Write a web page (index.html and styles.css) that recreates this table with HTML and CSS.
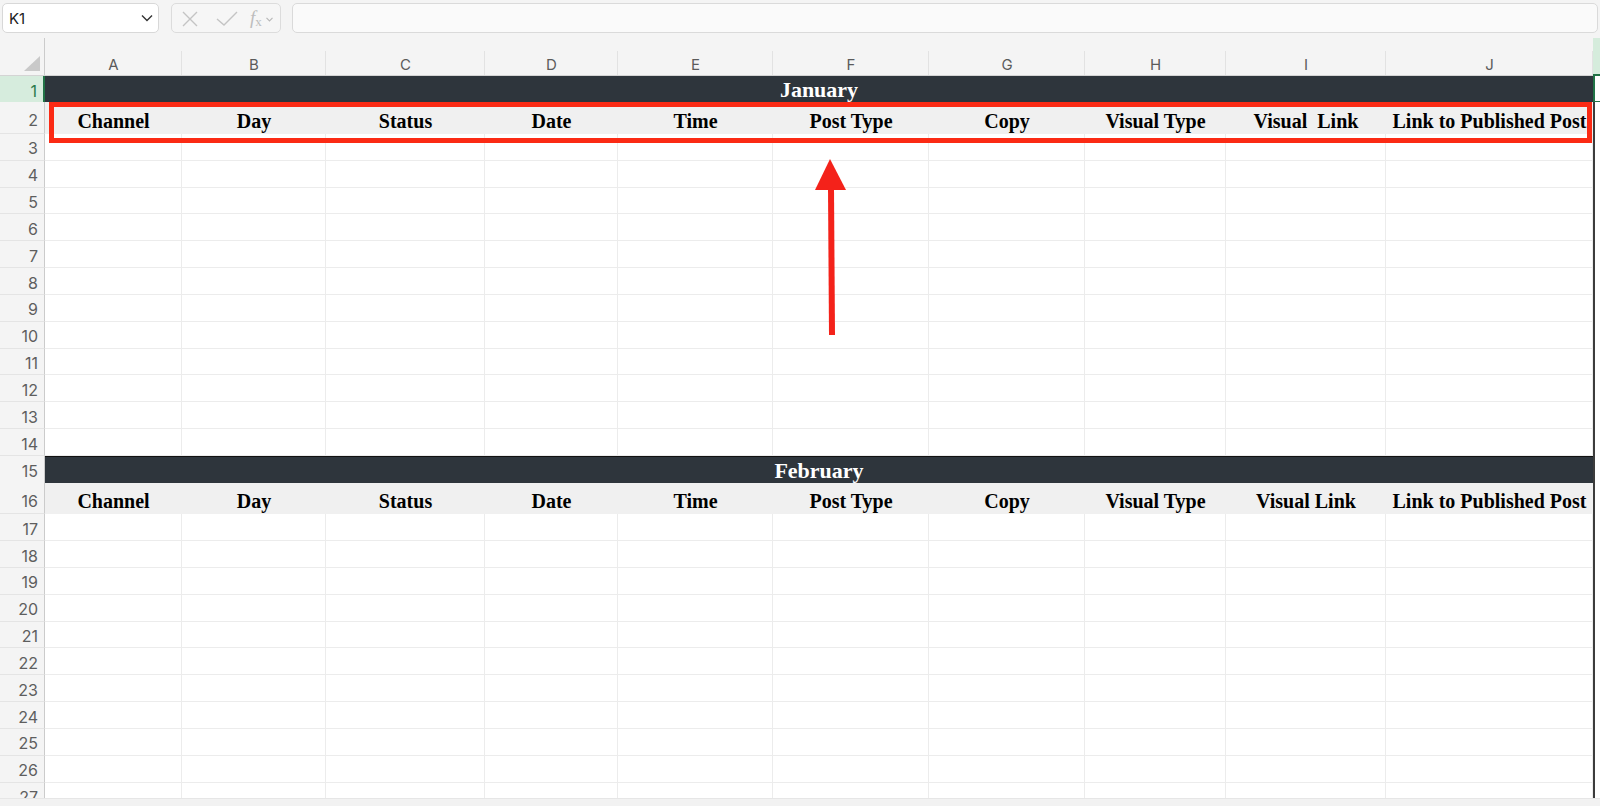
FILE: index.html
```html
<!DOCTYPE html>
<html lang="en">
<head>
<meta charset="utf-8">
<title>Content Calendar</title>
<link rel="stylesheet" href="styles.css">
</head>
<body>
<div class="app">
  <div class="toolbar">
    <div class="namebox">
      <span class="nb-text">K1</span>
      <svg class="chev" width="12" height="8" viewBox="0 0 12 8"><path d="M1 1.5 L6 6.5 L11 1.5" fill="none" stroke="#333" stroke-width="1.4"/></svg>
    </div>
    <div class="fxgroup">
      <svg class="ic-x" width="16" height="16" viewBox="0 0 16 16"><path d="M1 1 L15 15 M15 1 L1 15" stroke="#c4c4c4" stroke-width="1.4" fill="none"/></svg>
      <svg class="ic-ok" width="22" height="16" viewBox="0 0 22 16"><path d="M1 8 L8 14 L21 1" stroke="#c4c4c4" stroke-width="1.4" fill="none"/></svg>
      <span class="fx"><span class="fx-f">f</span><span class="fx-x">x</span></span>
      <svg class="ic-dd" width="7" height="5" viewBox="0 0 7 5"><path d="M0.5 0.8 L3.5 4 L6.5 0.8" stroke="#b8b8b8" stroke-width="1.1" fill="none"/></svg>
    </div>
    <div class="formula"></div>
  </div>

  <div class="sheet">
    <div class="row colhead">
      <div class="corner"><svg width="18" height="16" viewBox="0 0 18 16"><path d="M17 0 L17 15 L1 15 Z" fill="#c9c9c9"/></svg></div>
      <div class="ch">A</div><div class="ch">B</div><div class="ch">C</div><div class="ch">D</div><div class="ch">E</div>
      <div class="ch">F</div><div class="ch">G</div><div class="ch">H</div><div class="ch">I</div><div class="ch">J</div>
      <div class="ch chk"></div>
    </div>

    <div class="row r1"><div class="rh rsel">1</div><div class="band">January</div><div class="k ksel"></div></div>
    <div class="row r2"><div class="rh rh-hd">2</div>
      <div class="hd">Channel</div><div class="hd">Day</div><div class="hd">Status</div><div class="hd">Date</div><div class="hd">Time</div>
      <div class="hd">Post Type</div><div class="hd">Copy</div><div class="hd">Visual Type</div><div class="hd pre">Visual  Link</div><div class="hd">Link to Published Post</div>
      <div class="k kline"></div></div>
    <div class="row"><div class="rh">3</div><div class="c"></div><div class="c"></div><div class="c"></div><div class="c"></div><div class="c"></div><div class="c"></div><div class="c"></div><div class="c"></div><div class="c"></div><div class="c"></div><div class="k kline"></div></div>
    <div class="row"><div class="rh">4</div><div class="c"></div><div class="c"></div><div class="c"></div><div class="c"></div><div class="c"></div><div class="c"></div><div class="c"></div><div class="c"></div><div class="c"></div><div class="c"></div><div class="k kline"></div></div>
    <div class="row"><div class="rh">5</div><div class="c"></div><div class="c"></div><div class="c"></div><div class="c"></div><div class="c"></div><div class="c"></div><div class="c"></div><div class="c"></div><div class="c"></div><div class="c"></div><div class="k kline"></div></div>
    <div class="row"><div class="rh">6</div><div class="c"></div><div class="c"></div><div class="c"></div><div class="c"></div><div class="c"></div><div class="c"></div><div class="c"></div><div class="c"></div><div class="c"></div><div class="c"></div><div class="k kline"></div></div>
    <div class="row"><div class="rh">7</div><div class="c"></div><div class="c"></div><div class="c"></div><div class="c"></div><div class="c"></div><div class="c"></div><div class="c"></div><div class="c"></div><div class="c"></div><div class="c"></div><div class="k kline"></div></div>
    <div class="row"><div class="rh">8</div><div class="c"></div><div class="c"></div><div class="c"></div><div class="c"></div><div class="c"></div><div class="c"></div><div class="c"></div><div class="c"></div><div class="c"></div><div class="c"></div><div class="k kline"></div></div>
    <div class="row"><div class="rh">9</div><div class="c"></div><div class="c"></div><div class="c"></div><div class="c"></div><div class="c"></div><div class="c"></div><div class="c"></div><div class="c"></div><div class="c"></div><div class="c"></div><div class="k kline"></div></div>
    <div class="row"><div class="rh">10</div><div class="c"></div><div class="c"></div><div class="c"></div><div class="c"></div><div class="c"></div><div class="c"></div><div class="c"></div><div class="c"></div><div class="c"></div><div class="c"></div><div class="k kline"></div></div>
    <div class="row"><div class="rh">11</div><div class="c"></div><div class="c"></div><div class="c"></div><div class="c"></div><div class="c"></div><div class="c"></div><div class="c"></div><div class="c"></div><div class="c"></div><div class="c"></div><div class="k kline"></div></div>
    <div class="row"><div class="rh">12</div><div class="c"></div><div class="c"></div><div class="c"></div><div class="c"></div><div class="c"></div><div class="c"></div><div class="c"></div><div class="c"></div><div class="c"></div><div class="c"></div><div class="k kline"></div></div>
    <div class="row"><div class="rh">13</div><div class="c"></div><div class="c"></div><div class="c"></div><div class="c"></div><div class="c"></div><div class="c"></div><div class="c"></div><div class="c"></div><div class="c"></div><div class="c"></div><div class="k kline"></div></div>
    <div class="row"><div class="rh">14</div><div class="c"></div><div class="c"></div><div class="c"></div><div class="c"></div><div class="c"></div><div class="c"></div><div class="c"></div><div class="c"></div><div class="c"></div><div class="c"></div><div class="k kline"></div></div>

    <div class="row r15"><div class="rh">15</div><div class="band band-top">February</div><div class="k kline"></div></div>
    <div class="row r16"><div class="rh rh-hd">16</div>
      <div class="hd">Channel</div><div class="hd">Day</div><div class="hd">Status</div><div class="hd">Date</div><div class="hd">Time</div>
      <div class="hd">Post Type</div><div class="hd">Copy</div><div class="hd">Visual Type</div><div class="hd">Visual Link</div><div class="hd">Link to Published Post</div>
      <div class="k kline"></div></div>
    <div class="row"><div class="rh">17</div><div class="c"></div><div class="c"></div><div class="c"></div><div class="c"></div><div class="c"></div><div class="c"></div><div class="c"></div><div class="c"></div><div class="c"></div><div class="c"></div><div class="k kline"></div></div>
    <div class="row"><div class="rh">18</div><div class="c"></div><div class="c"></div><div class="c"></div><div class="c"></div><div class="c"></div><div class="c"></div><div class="c"></div><div class="c"></div><div class="c"></div><div class="c"></div><div class="k kline"></div></div>
    <div class="row"><div class="rh">19</div><div class="c"></div><div class="c"></div><div class="c"></div><div class="c"></div><div class="c"></div><div class="c"></div><div class="c"></div><div class="c"></div><div class="c"></div><div class="c"></div><div class="k kline"></div></div>
    <div class="row"><div class="rh">20</div><div class="c"></div><div class="c"></div><div class="c"></div><div class="c"></div><div class="c"></div><div class="c"></div><div class="c"></div><div class="c"></div><div class="c"></div><div class="c"></div><div class="k kline"></div></div>
    <div class="row"><div class="rh">21</div><div class="c"></div><div class="c"></div><div class="c"></div><div class="c"></div><div class="c"></div><div class="c"></div><div class="c"></div><div class="c"></div><div class="c"></div><div class="c"></div><div class="k kline"></div></div>
    <div class="row"><div class="rh">22</div><div class="c"></div><div class="c"></div><div class="c"></div><div class="c"></div><div class="c"></div><div class="c"></div><div class="c"></div><div class="c"></div><div class="c"></div><div class="c"></div><div class="k kline"></div></div>
    <div class="row"><div class="rh">23</div><div class="c"></div><div class="c"></div><div class="c"></div><div class="c"></div><div class="c"></div><div class="c"></div><div class="c"></div><div class="c"></div><div class="c"></div><div class="c"></div><div class="k kline"></div></div>
    <div class="row"><div class="rh">24</div><div class="c"></div><div class="c"></div><div class="c"></div><div class="c"></div><div class="c"></div><div class="c"></div><div class="c"></div><div class="c"></div><div class="c"></div><div class="c"></div><div class="k kline"></div></div>
    <div class="row"><div class="rh">25</div><div class="c"></div><div class="c"></div><div class="c"></div><div class="c"></div><div class="c"></div><div class="c"></div><div class="c"></div><div class="c"></div><div class="c"></div><div class="c"></div><div class="k kline"></div></div>
    <div class="row"><div class="rh">26</div><div class="c"></div><div class="c"></div><div class="c"></div><div class="c"></div><div class="c"></div><div class="c"></div><div class="c"></div><div class="c"></div><div class="c"></div><div class="c"></div><div class="k kline"></div></div>
    <div class="row"><div class="rh">27</div><div class="c"></div><div class="c"></div><div class="c"></div><div class="c"></div><div class="c"></div><div class="c"></div><div class="c"></div><div class="c"></div><div class="c"></div><div class="c"></div><div class="k kline"></div></div>

    <div class="redbox"></div>
    <svg class="arrow" width="40" height="185" viewBox="0 0 40 185">
      <polygon points="18,4 3,35 34,35" fill="#f4221a"/>
      <polygon points="16,33 22,33 23,180 17,180" fill="#f4221a"/>
    </svg>
  </div>

  <div class="statusstrip"></div>
</div>
</body>
</html>
```

FILE: styles.css
```css
* { box-sizing: border-box; margin: 0; padding: 0; }

html, body {
  width: 1600px;
  height: 806px;
  overflow: hidden;
  background: #f4f4f4;
  font-family: "Inter", "Liberation Sans", sans-serif;
}

.app {
  width: 1600px;
  height: 806px;
  display: flex;
  flex-direction: column;
}

/* ---------- toolbar ---------- */
.toolbar {
  height: 38px;
  flex: none;
  display: flex;
  align-items: flex-start;
  padding: 3px 2px 0 2px;
  background: #f4f4f4;
}

.namebox {
  width: 157px;
  height: 30px;
  background: #ffffff;
  border: 1px solid #d8d8d8;
  border-radius: 5px;
  display: flex;
  align-items: center;
  justify-content: space-between;
  padding: 0 5px 0 6px;
}

.nb-text {
  font-size: 15px;
  color: #222;
}

.fxgroup {
  width: 110px;
  height: 30px;
  margin-left: 12px;
  border: 1px solid #dcdcdc;
  border-radius: 5px;
  background: #f6f6f6;
  display: flex;
  align-items: center;
  padding-left: 10px;
}

.ic-x { margin-top: 2px; }
.ic-ok { margin-left: 18px; margin-top: 1px; }

.fx {
  margin-left: 12px;
  font-family: "Liberation Serif", serif;
  color: #bdbdbd;
  display: flex;
  align-items: baseline;
}
.fx-f { font-style: italic; font-size: 19px; }
.fx-x { font-size: 13px; margin-left: 0; position: relative; top: 2px; }

.ic-dd { margin-left: 4px; margin-top: 2px; }

.formula {
  flex: 1;
  height: 30px;
  margin-left: 11px;
  background: #fafafa;
  border: 1px solid #dadada;
  border-radius: 5px;
}

/* ---------- sheet ---------- */
.sheet {
  position: relative;
  height: 760px;
  flex: none;
  overflow: hidden;
  background: #ffffff;
}

.row {
  display: grid;
  grid-template-columns: 45px 137px 144px 159px 133px 155px 156px 156px 141px 160px 207px 1fr;
  height: 26.83px;
}

.colhead {
  height: 38px;
  background: #f4f4f4;
  border-bottom: 1px solid #d4d4d4;
}

.corner {
  border-right: 1px solid #cbcbcb;
  display: flex;
  align-items: flex-end;
  justify-content: flex-end;
  padding: 0 3px 3px 0;
}

.ch {
  position: relative;
  display: flex;
  align-items: center;
  justify-content: center;
  padding-top: 16px;
  font-size: 15px;
  color: #5b5b5b;
}

.ch::after {
  content: "";
  position: absolute;
  right: 0;
  bottom: 0;
  width: 1px;
  height: 24px;
  background: #e2e2e2;
}

.chk {
  background: #d5ecdc;
  border-bottom: 2px solid #217346;
  margin-bottom: -1px;
}
.chk::after { display: none; }

.rh {
  background: #f4f4f4;
  border-right: 1px solid #cbcbcb;
  border-bottom: 1px solid #e4e4e4;
  display: flex;
  align-items: center;
  justify-content: flex-end;
  padding: 3px 6px 0 0;
  font-size: 16px;
  color: #5e5e5e;
}

.rh-hd { padding-top: 5px; }

.rsel {
  background: #d6ecdd;
  color: #2c7a4b;
  border-right: 2px solid #217346;
}

.c {
  border-right: 1px solid #ececec;
  border-bottom: 1px solid #ececec;
}

.k { background: #ffffff; }
.kline { border-left: 2px solid #3c3c3c; }
.ksel {
  border: 2px solid #217346;
  border-right: none;
  margin-top: -3px;
}

/* month band */
.r1 { height: 26px; }
.r15 { height: 27px; }

.band {
  grid-column: 2 / 12;
  background: #2e353c;
  color: #ffffff;
  font-family: "Liberation Serif", "Times New Roman", serif;
  font-weight: bold;
  font-size: 22px;
  display: flex;
  align-items: center;
  justify-content: center;
  padding-top: 1px;
}

.band-top { border-top: 1px solid #111111; }

/* column header rows */
.r2 { height: 32px; }
.r16 { height: 31.4px; }

.hd {
  background: #f0f0f0;
  font-family: "Liberation Serif", "Times New Roman", serif;
  font-weight: bold;
  font-size: 20px;
  color: #000000;
  display: flex;
  align-items: center;
  justify-content: center;
  padding-top: 6px;
  white-space: nowrap;
}

.pre { white-space: pre; }

/* annotations */
.redbox {
  position: absolute;
  left: 49px;
  top: 63.5px;
  width: 1543px;
  height: 41.5px;
  border: 5px solid #fb2a14;
  pointer-events: none;
}

.arrow {
  position: absolute;
  left: 812px;
  top: 117px;
}

.statusstrip {
  flex: 1;
  background: #f2f2f2;
  border-top: 1px solid #e6e6e6;
}
```
